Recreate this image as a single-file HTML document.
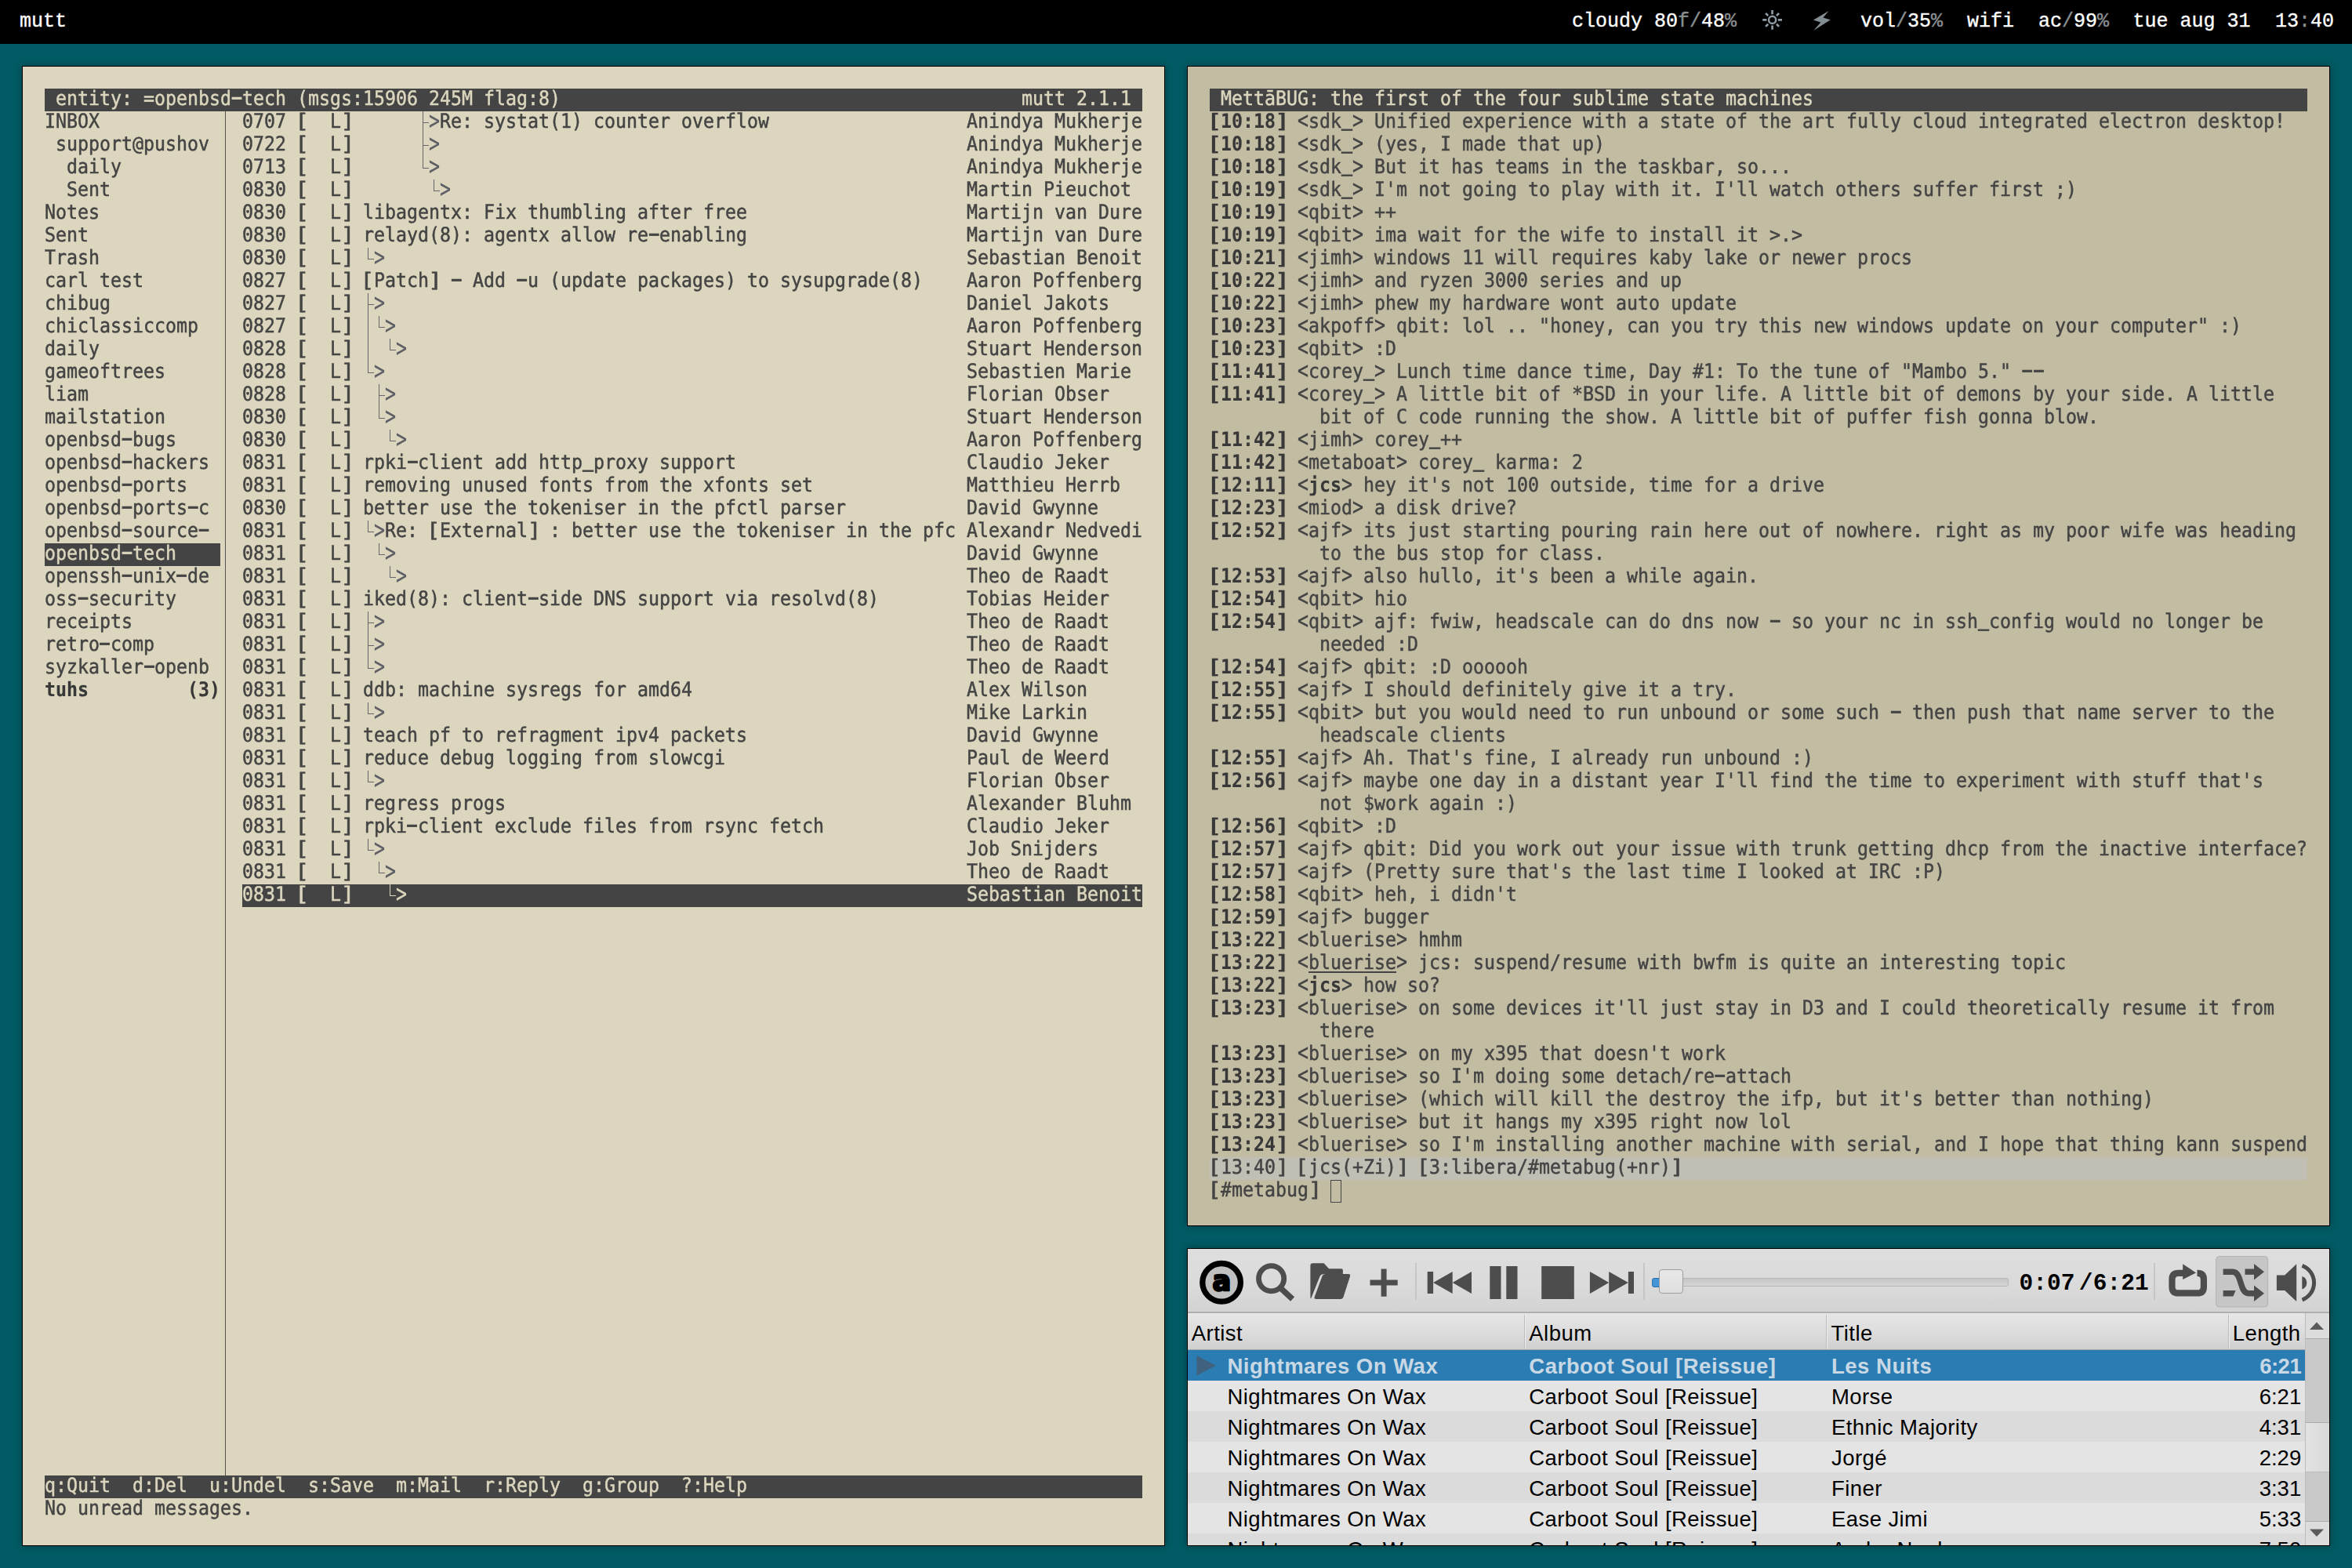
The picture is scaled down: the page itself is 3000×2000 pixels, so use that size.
<!DOCTYPE html><html lang="en"><head><meta charset="utf-8"><title>desktop</title><style>
html,body{margin:0;padding:0}
body{width:3000px;height:2000px;overflow:hidden;background:#005b64;position:relative;font-family:"DejaVu Sans Mono", "Liberation Mono", monospace;}
#bar{position:absolute;left:0;top:0;width:3000px;height:56px;background:#000}
.bt{position:absolute;top:-0.2px;height:56px;line-height:56px;transform:scaleY(1.035);transform-origin:0 62.5%;-webkit-text-stroke:0.35px;font-family:"Liberation Mono",monospace;font-size:25px;color:#fff;white-space:pre}
.bt i{font-style:normal;color:#8a8f91}
.win{position:absolute;box-sizing:border-box;border:1px solid #000;overflow:hidden;box-shadow:0 0 9px rgba(0,0,0,.35)}
.hl{position:absolute;height:29px;background:#444444}
.tx{position:absolute;left:28px;top:28px;-webkit-text-stroke:0.5px;text-rendering:geometricPrecision;width:1568.68px;transform:scaleX(0.91582);transform-origin:0 0;font-size:25.4px;color:#444444}
.r{position:absolute;left:0;height:29px;line-height:29px;white-space:pre;margin-top:-2.25px}
.inv{color:#dbd6bd}
b{font-weight:bold;color:#383838;-webkit-text-stroke:0.15px}
.t{color:transparent;-webkit-text-stroke:0}
.g{color:#5e5e66;-webkit-text-stroke:0.15px;display:inline-block;transform:translateY(-0.3px) scaleY(1.3);transform-origin:50% 58%}
.kl{display:inline-block;transform:scaleX(1.3);transform-origin:80% 50%}
.kr{display:inline-block;transform:scaleX(1.3);transform-origin:20% 50%}
.h{display:inline-block;transform:translateY(-1.6px) scale(2,1.25);transform-origin:50% 62%}
.us{display:inline-block;transform:translateY(-2.9px) scaleY(1.6);transform-origin:50% 98%}
.a{display:inline-block;-webkit-text-stroke:0.25px;transform:scaleY(1.24);transform-origin:50% 58%}
.gi{color:#dbd6bd;-webkit-text-stroke:0.15px;display:inline-block;transform:translateY(-0.3px) scaleY(1.3);transform-origin:50% 58%}
.tl{position:absolute;background:#64646a}
u{text-decoration:underline;text-underline-offset:3px;text-decoration-thickness:1.5px}

#pl{position:absolute;left:1514px;top:1592px;width:1458px;height:380px;box-sizing:border-box;border:1px solid #000;background:#dcdcdc;overflow:hidden;font-family:"Liberation Sans",sans-serif;box-shadow:0 0 9px rgba(0,0,0,.35)}
#pl .tb{position:absolute;left:0;top:0;width:1456px;height:80px;background:linear-gradient(#dedede,#dadada 60%,#d3d3d3)}
#pl .tbl{position:absolute;left:0;top:79.5px;width:1456px;height:2.5px;background:linear-gradient(#b9b9b9,#a8a8a8 50%,#b4b4b4)}
#pl svg{position:absolute;left:0;top:0}
#pl .sep{position:absolute;top:18px;width:2px;height:47px;background:#c6c6c6}
#pl .tm{position:absolute;top:26px;height:36px;line-height:36px;font-family:"Liberation Mono",monospace;font-weight:bold;font-size:29.5px;color:#000;white-space:pre}
#pl .hd{position:absolute;left:0;top:82px;width:1425px;height:46px;background:linear-gradient(#e6e6e6,#dcdcdc 55%,#d0d0d0);border-bottom:1px solid #a9a9a9}
#pl .hc{position:absolute;top:83px;height:45px;line-height:50px;font-size:27.5px;letter-spacing:.45px;color:#000;white-space:pre}
#pl .hs{position:absolute;top:84px;width:2px;height:44px;background:linear-gradient(90deg,#bdbdbd 50%,#ececec 50%)}
#pl .row{position:absolute;left:0;width:1425px;height:39px}
#pl .c.n{letter-spacing:0}
#pl .sel .c.n{letter-spacing:-.5px}
#pl .c{position:absolute;top:0;height:39px;line-height:41.6px;font-size:27.5px;letter-spacing:.42px;color:#000;white-space:pre}
#pl .sel .c{color:#c8d8e4;font-weight:bold;letter-spacing:.5px}
#pl .sb{position:absolute;left:1425px;top:82px;width:31px;height:297px;background:#dcdcdc;border-left:1px solid #bdbdbd;box-sizing:border-box}
</style></head><body>
<div id="bar">
<div class="bt" style="left:25px">mutt</div>
<div class="bt" style="left:2005px">cloudy 80<i>f/</i>48<i>%</i></div>
<svg style="position:absolute;left:2240px;top:0" width="110" height="56" viewBox="2240 0 110 56"><circle cx="2260.6" cy="25.4" r="4.55" fill="none" stroke="#8d99a3" stroke-width="2.5"/><path d="M2267.80 25.40 L2273.00 25.40 M2265.97 30.77 L2269.09 33.89 M2260.60 32.60 L2260.60 37.80 M2255.23 30.77 L2252.11 33.89 M2253.40 25.40 L2248.20 25.40 M2255.23 20.03 L2252.11 16.91 M2260.60 18.20 L2260.60 13.00 M2265.97 20.03 L2269.09 16.91" stroke="#8d99a3" stroke-width="2.7" fill="none"/><path d="M2332.55 14.08 L2312.9 25.4 L2322.35 28.47 L2313.16 38.93 L2334.85 25.3 L2325.4 22.6 Z" fill="#828d94"/></svg>
<div class="bt" style="left:2373px">vol<i>/</i>35<i>%</i></div>
<div class="bt" style="left:2509px">wifi</div>
<div class="bt" style="left:2600px">ac<i>/</i>99<i>%</i></div>
<div class="bt" style="left:2720.5px">tue aug 31</div>
<div class="bt" style="left:2902px">13<i>:</i>40</div>
</div>
<div class="win" id="mutt" style="left:28px;top:84px;width:1458px;height:1888px;background:#dbd6bd">
<div class="hl" style="left:28px;top:28px;width:1400px;background:#444444"></div>
<div class="hl" style="left:28px;top:608px;width:224px;background:#444444"></div>
<div class="hl" style="left:280px;top:1043px;width:1148px;background:#444444"></div>
<div class="hl" style="left:28px;top:1797px;width:1400px;background:#444444"></div>
<div style="position:absolute;left:258px;top:57px;width:1px;height:1740px;background:#55554e"></div>
<div class="tl" style="left:510px;top:57px;width:1px;height:29px"></div><div class="tl" style="left:510px;top:71px;width:8px;height:1px"></div>
<div class="tl" style="left:510px;top:86px;width:1px;height:29px"></div><div class="tl" style="left:510px;top:100px;width:8px;height:1px"></div>
<div class="tl" style="left:510px;top:115px;width:1px;height:15px"></div><div class="tl" style="left:510px;top:129px;width:8px;height:1px"></div>
<div class="tl" style="left:524px;top:144px;width:1px;height:15px"></div><div class="tl" style="left:524px;top:158px;width:8px;height:1px"></div>


<div class="tl" style="left:440px;top:231px;width:1px;height:15px"></div><div class="tl" style="left:440px;top:245px;width:8px;height:1px"></div>

<div class="tl" style="left:440px;top:289px;width:1px;height:29px"></div><div class="tl" style="left:440px;top:303px;width:8px;height:1px"></div>
<div class="tl" style="left:440px;top:318px;width:1px;height:29px"></div><div class="tl" style="left:454px;top:318px;width:1px;height:15px"></div><div class="tl" style="left:454px;top:332px;width:8px;height:1px"></div>
<div class="tl" style="left:440px;top:347px;width:1px;height:29px"></div><div class="tl" style="left:468px;top:347px;width:1px;height:15px"></div><div class="tl" style="left:468px;top:361px;width:8px;height:1px"></div>
<div class="tl" style="left:440px;top:376px;width:1px;height:15px"></div><div class="tl" style="left:440px;top:390px;width:8px;height:1px"></div>
<div class="tl" style="left:454px;top:405px;width:1px;height:29px"></div><div class="tl" style="left:454px;top:419px;width:8px;height:1px"></div>
<div class="tl" style="left:454px;top:434px;width:1px;height:15px"></div><div class="tl" style="left:454px;top:448px;width:8px;height:1px"></div>
<div class="tl" style="left:468px;top:463px;width:1px;height:15px"></div><div class="tl" style="left:468px;top:477px;width:8px;height:1px"></div>



<div class="tl" style="left:440px;top:579px;width:1px;height:15px"></div><div class="tl" style="left:440px;top:593px;width:8px;height:1px"></div>
<div class="tl" style="left:454px;top:608px;width:1px;height:15px"></div><div class="tl" style="left:454px;top:622px;width:8px;height:1px"></div>
<div class="tl" style="left:468px;top:637px;width:1px;height:15px"></div><div class="tl" style="left:468px;top:651px;width:8px;height:1px"></div>

<div class="tl" style="left:440px;top:695px;width:1px;height:29px"></div><div class="tl" style="left:440px;top:709px;width:8px;height:1px"></div>
<div class="tl" style="left:440px;top:724px;width:1px;height:29px"></div><div class="tl" style="left:440px;top:738px;width:8px;height:1px"></div>
<div class="tl" style="left:440px;top:753px;width:1px;height:15px"></div><div class="tl" style="left:440px;top:767px;width:8px;height:1px"></div>

<div class="tl" style="left:440px;top:811px;width:1px;height:15px"></div><div class="tl" style="left:440px;top:825px;width:8px;height:1px"></div>


<div class="tl" style="left:440px;top:898px;width:1px;height:15px"></div><div class="tl" style="left:440px;top:912px;width:8px;height:1px"></div>


<div class="tl" style="left:440px;top:985px;width:1px;height:15px"></div><div class="tl" style="left:440px;top:999px;width:8px;height:1px"></div>
<div class="tl" style="left:454px;top:1014px;width:1px;height:15px"></div><div class="tl" style="left:454px;top:1028px;width:8px;height:1px"></div>
<div class="tl" style="left:468px;top:1043px;width:1px;height:15px;background:#dbd6bd"></div><div class="tl" style="left:468px;top:1057px;width:8px;height:1px;background:#dbd6bd"></div>
<div class="tx">
<div class="r inv" style="top:0px"> entity: =openbsd<span class="h">-</span>tech (msgs:15906 245M flag:8)                                          mutt 2.1.1 </div>
<div class="r" style="top:29px">INBOX             0707 <span class="kl">[</span>  L<span class="kr">]</span>      <span class="t">├</span><span class="g">&gt;</span>Re: systat(1) counter overflow                  Anindya Mukherje</div>
<div class="r" style="top:58px"> support@pushov   0722 <span class="kl">[</span>  L<span class="kr">]</span>      <span class="t">├</span><span class="g">&gt;</span>                                                Anindya Mukherje</div>
<div class="r" style="top:87px">  daily           0713 <span class="kl">[</span>  L<span class="kr">]</span>      <span class="t">└</span><span class="g">&gt;</span>                                                Anindya Mukherje</div>
<div class="r" style="top:116px">  Sent            0830 <span class="kl">[</span>  L<span class="kr">]</span>       <span class="t">└</span><span class="g">&gt;</span>                                               Martin Pieuchot</div>
<div class="r" style="top:145px">Notes             0830 <span class="kl">[</span>  L<span class="kr">]</span> libagentx: Fix thumbling after free                    Martijn van Dure</div>
<div class="r" style="top:174px">Sent              0830 <span class="kl">[</span>  L<span class="kr">]</span> relayd(8): agentx allow re<span class="h">-</span>enabling                    Martijn van Dure</div>
<div class="r" style="top:203px">Trash             0830 <span class="kl">[</span>  L<span class="kr">]</span> <span class="t">└</span><span class="g">&gt;</span>                                                     Sebastian Benoit</div>
<div class="r" style="top:232px">carl test         0827 <span class="kl">[</span>  L<span class="kr">]</span> <span class="kl">[</span>Patch<span class="kr">]</span> <span class="h">-</span> Add <span class="h">-</span>u (update packages) to sysupgrade(8)    Aaron Poffenberg</div>
<div class="r" style="top:261px">chibug            0827 <span class="kl">[</span>  L<span class="kr">]</span> <span class="t">├</span><span class="g">&gt;</span>                                                     Daniel Jakots</div>
<div class="r" style="top:290px">chiclassiccomp    0827 <span class="kl">[</span>  L<span class="kr">]</span> <span class="t">│</span><span class="t">└</span><span class="g">&gt;</span>                                                    Aaron Poffenberg</div>
<div class="r" style="top:319px">daily             0828 <span class="kl">[</span>  L<span class="kr">]</span> <span class="t">│</span> <span class="t">└</span><span class="g">&gt;</span>                                                   Stuart Henderson</div>
<div class="r" style="top:348px">gameoftrees       0828 <span class="kl">[</span>  L<span class="kr">]</span> <span class="t">└</span><span class="g">&gt;</span>                                                     Sebastien Marie</div>
<div class="r" style="top:377px">liam              0828 <span class="kl">[</span>  L<span class="kr">]</span>  <span class="t">├</span><span class="g">&gt;</span>                                                    Florian Obser</div>
<div class="r" style="top:406px">mailstation       0830 <span class="kl">[</span>  L<span class="kr">]</span>  <span class="t">└</span><span class="g">&gt;</span>                                                    Stuart Henderson</div>
<div class="r" style="top:435px">openbsd<span class="h">-</span>bugs      0830 <span class="kl">[</span>  L<span class="kr">]</span>   <span class="t">└</span><span class="g">&gt;</span>                                                   Aaron Poffenberg</div>
<div class="r" style="top:464px">openbsd<span class="h">-</span>hackers   0831 <span class="kl">[</span>  L<span class="kr">]</span> rpki<span class="h">-</span>client add http<span class="us">_</span>proxy support                     Claudio Jeker</div>
<div class="r" style="top:493px">openbsd<span class="h">-</span>ports     0831 <span class="kl">[</span>  L<span class="kr">]</span> removing unused fonts from the xfonts set              Matthieu Herrb</div>
<div class="r" style="top:522px">openbsd<span class="h">-</span>ports<span class="h">-</span>c   0830 <span class="kl">[</span>  L<span class="kr">]</span> better use the tokeniser in the pfctl parser           David Gwynne</div>
<div class="r" style="top:551px">openbsd<span class="h">-</span>source<span class="h">-</span>   0831 <span class="kl">[</span>  L<span class="kr">]</span> <span class="t">└</span><span class="g">&gt;</span>Re: <span class="kl">[</span>External<span class="kr">]</span> : better use the tokeniser in the pfc Alexandr Nedvedi</div>
<div class="r" style="top:580px"><span class="inv">openbsd<span class="h">-</span>tech    </span>  0831 <span class="kl">[</span>  L<span class="kr">]</span>  <span class="t">└</span><span class="g">&gt;</span>                                                    David Gwynne</div>
<div class="r" style="top:609px">openssh<span class="h">-</span>unix<span class="h">-</span>de   0831 <span class="kl">[</span>  L<span class="kr">]</span>   <span class="t">└</span><span class="g">&gt;</span>                                                   Theo de Raadt</div>
<div class="r" style="top:638px">oss<span class="h">-</span>security      0831 <span class="kl">[</span>  L<span class="kr">]</span> iked(8): client<span class="h">-</span>side DNS support via resolvd(8)        Tobias Heider</div>
<div class="r" style="top:667px">receipts          0831 <span class="kl">[</span>  L<span class="kr">]</span> <span class="t">├</span><span class="g">&gt;</span>                                                     Theo de Raadt</div>
<div class="r" style="top:696px">retro<span class="h">-</span>comp        0831 <span class="kl">[</span>  L<span class="kr">]</span> <span class="t">├</span><span class="g">&gt;</span>                                                     Theo de Raadt</div>
<div class="r" style="top:725px">syzkaller<span class="h">-</span>openb   0831 <span class="kl">[</span>  L<span class="kr">]</span> <span class="t">└</span><span class="g">&gt;</span>                                                     Theo de Raadt</div>
<div class="r" style="top:754px"><b>tuhs         (3)</b>  0831 <span class="kl">[</span>  L<span class="kr">]</span> ddb: machine sysregs for amd64                         Alex Wilson</div>
<div class="r" style="top:783px">                  0831 <span class="kl">[</span>  L<span class="kr">]</span> <span class="t">└</span><span class="g">&gt;</span>                                                     Mike Larkin</div>
<div class="r" style="top:812px">                  0831 <span class="kl">[</span>  L<span class="kr">]</span> teach pf to refragment ipv4 packets                    David Gwynne</div>
<div class="r" style="top:841px">                  0831 <span class="kl">[</span>  L<span class="kr">]</span> reduce debug logging from slowcgi                      Paul de Weerd</div>
<div class="r" style="top:870px">                  0831 <span class="kl">[</span>  L<span class="kr">]</span> <span class="t">└</span><span class="g">&gt;</span>                                                     Florian Obser</div>
<div class="r" style="top:899px">                  0831 <span class="kl">[</span>  L<span class="kr">]</span> regress progs                                          Alexander Bluhm</div>
<div class="r" style="top:928px">                  0831 <span class="kl">[</span>  L<span class="kr">]</span> rpki<span class="h">-</span>client exclude files from rsync fetch             Claudio Jeker</div>
<div class="r" style="top:957px">                  0831 <span class="kl">[</span>  L<span class="kr">]</span> <span class="t">└</span><span class="g">&gt;</span>                                                     Job Snijders</div>
<div class="r" style="top:986px">                  0831 <span class="kl">[</span>  L<span class="kr">]</span>  <span class="t">└</span><span class="g">&gt;</span>                                                    Theo de Raadt</div>
<div class="r" style="top:1015px">                  <span class="inv">0831 <span class="kl">[</span>  L<span class="kr">]</span>   <span class="t">└</span><span class="gi">&gt;</span>                                                   Sebastian Benoit</span></div>
<div class="r inv" style="top:1769px">q:Quit  d:Del  u:Undel  s:Save  m:Mail  r:Reply  g:Group  ?:Help</div>
<div class="r" style="top:1798px">No unread messages.</div>
</div></div>
<div class="win" id="irc" style="left:1514px;top:84px;width:1458px;height:1480px;background:#c2bca3">
<div class="hl" style="left:28px;top:28px;width:1400px;background:#444444"></div>
<div class="hl" style="left:28px;top:1391px;width:1400px;background:#c1beb4"></div>
<div class="tx">
<div class="r inv" style="top:0px"> MettāBUG: the first of the four sublime state machines</div>
<div class="r" style="top:29px"><b><span class="kl">[</span>10:18<span class="kr">]</span></b> <span class="a">&lt;</span>sdk<span class="us">_</span><span class="a">&gt;</span> Unified experience with a state of the art fully cloud integrated electron desktop!</div>
<div class="r" style="top:58px"><b><span class="kl">[</span>10:18<span class="kr">]</span></b> <span class="a">&lt;</span>sdk<span class="us">_</span><span class="a">&gt;</span> (yes, I made that up)</div>
<div class="r" style="top:87px"><b><span class="kl">[</span>10:18<span class="kr">]</span></b> <span class="a">&lt;</span>sdk<span class="us">_</span><span class="a">&gt;</span> But it has teams in the taskbar, so...</div>
<div class="r" style="top:116px"><b><span class="kl">[</span>10:19<span class="kr">]</span></b> <span class="a">&lt;</span>sdk<span class="us">_</span><span class="a">&gt;</span> I'm not going to play with it. I'll watch others suffer first ;)</div>
<div class="r" style="top:145px"><b><span class="kl">[</span>10:19<span class="kr">]</span></b> <span class="a">&lt;</span>qbit<span class="a">&gt;</span> ++</div>
<div class="r" style="top:174px"><b><span class="kl">[</span>10:19<span class="kr">]</span></b> <span class="a">&lt;</span>qbit<span class="a">&gt;</span> ima wait for the wife to install it &gt;.&gt;</div>
<div class="r" style="top:203px"><b><span class="kl">[</span>10:21<span class="kr">]</span></b> <span class="a">&lt;</span>jimh<span class="a">&gt;</span> windows 11 will requires kaby lake or newer procs</div>
<div class="r" style="top:232px"><b><span class="kl">[</span>10:22<span class="kr">]</span></b> <span class="a">&lt;</span>jimh<span class="a">&gt;</span> and ryzen 3000 series and up</div>
<div class="r" style="top:261px"><b><span class="kl">[</span>10:22<span class="kr">]</span></b> <span class="a">&lt;</span>jimh<span class="a">&gt;</span> phew my hardware wont auto update</div>
<div class="r" style="top:290px"><b><span class="kl">[</span>10:23<span class="kr">]</span></b> <span class="a">&lt;</span>akpoff<span class="a">&gt;</span> qbit: lol .. "honey, can you try this new windows update on your computer" :)</div>
<div class="r" style="top:319px"><b><span class="kl">[</span>10:23<span class="kr">]</span></b> <span class="a">&lt;</span>qbit<span class="a">&gt;</span> :D</div>
<div class="r" style="top:348px"><b><span class="kl">[</span>11:41<span class="kr">]</span></b> <span class="a">&lt;</span>corey<span class="us">_</span><span class="a">&gt;</span> Lunch time dance time, Day #1: To the tune of "Mambo 5." <span class="h">-</span><span class="h">-</span></div>
<div class="r" style="top:377px"><b><span class="kl">[</span>11:41<span class="kr">]</span></b> <span class="a">&lt;</span>corey<span class="us">_</span><span class="a">&gt;</span> A little bit of *BSD in your life. A little bit of demons by your side. A little</div>
<div class="r" style="top:406px">          bit of C code running the show. A little bit of puffer fish gonna blow.</div>
<div class="r" style="top:435px"><b><span class="kl">[</span>11:42<span class="kr">]</span></b> <span class="a">&lt;</span>jimh<span class="a">&gt;</span> corey<span class="us">_</span>++</div>
<div class="r" style="top:464px"><b><span class="kl">[</span>11:42<span class="kr">]</span></b> <span class="a">&lt;</span>metaboat<span class="a">&gt;</span> corey<span class="us">_</span> karma: 2</div>
<div class="r" style="top:493px"><b><span class="kl">[</span>12:11<span class="kr">]</span></b> <span class="a">&lt;</span><b>jcs</b><span class="a">&gt;</span> hey it's not 100 outside, time for a drive</div>
<div class="r" style="top:522px"><b><span class="kl">[</span>12:23<span class="kr">]</span></b> <span class="a">&lt;</span>miod<span class="a">&gt;</span> a disk drive?</div>
<div class="r" style="top:551px"><b><span class="kl">[</span>12:52<span class="kr">]</span></b> <span class="a">&lt;</span>ajf<span class="a">&gt;</span> its just starting pouring rain here out of nowhere. right as my poor wife was heading</div>
<div class="r" style="top:580px">          to the bus stop for class.</div>
<div class="r" style="top:609px"><b><span class="kl">[</span>12:53<span class="kr">]</span></b> <span class="a">&lt;</span>ajf<span class="a">&gt;</span> also hullo, it's been a while again.</div>
<div class="r" style="top:638px"><b><span class="kl">[</span>12:54<span class="kr">]</span></b> <span class="a">&lt;</span>qbit<span class="a">&gt;</span> hio</div>
<div class="r" style="top:667px"><b><span class="kl">[</span>12:54<span class="kr">]</span></b> <span class="a">&lt;</span>qbit<span class="a">&gt;</span> ajf: fwiw, headscale can do dns now <span class="h">-</span> so your nc in ssh<span class="us">_</span>config would no longer be</div>
<div class="r" style="top:696px">          needed :D</div>
<div class="r" style="top:725px"><b><span class="kl">[</span>12:54<span class="kr">]</span></b> <span class="a">&lt;</span>ajf<span class="a">&gt;</span> qbit: :D oooooh</div>
<div class="r" style="top:754px"><b><span class="kl">[</span>12:55<span class="kr">]</span></b> <span class="a">&lt;</span>ajf<span class="a">&gt;</span> I should definitely give it a try.</div>
<div class="r" style="top:783px"><b><span class="kl">[</span>12:55<span class="kr">]</span></b> <span class="a">&lt;</span>qbit<span class="a">&gt;</span> but you would need to run unbound or some such <span class="h">-</span> then push that name server to the</div>
<div class="r" style="top:812px">          headscale clients</div>
<div class="r" style="top:841px"><b><span class="kl">[</span>12:55<span class="kr">]</span></b> <span class="a">&lt;</span>ajf<span class="a">&gt;</span> Ah. That's fine, I already run unbound :)</div>
<div class="r" style="top:870px"><b><span class="kl">[</span>12:56<span class="kr">]</span></b> <span class="a">&lt;</span>ajf<span class="a">&gt;</span> maybe one day in a distant year I'll find the time to experiment with stuff that's</div>
<div class="r" style="top:899px">          not $work again :)</div>
<div class="r" style="top:928px"><b><span class="kl">[</span>12:56<span class="kr">]</span></b> <span class="a">&lt;</span>qbit<span class="a">&gt;</span> :D</div>
<div class="r" style="top:957px"><b><span class="kl">[</span>12:57<span class="kr">]</span></b> <span class="a">&lt;</span>ajf<span class="a">&gt;</span> qbit: Did you work out your issue with trunk getting dhcp from the inactive interface?</div>
<div class="r" style="top:986px"><b><span class="kl">[</span>12:57<span class="kr">]</span></b> <span class="a">&lt;</span>ajf<span class="a">&gt;</span> (Pretty sure that's the last time I looked at IRC :P)</div>
<div class="r" style="top:1015px"><b><span class="kl">[</span>12:58<span class="kr">]</span></b> <span class="a">&lt;</span>qbit<span class="a">&gt;</span> heh, i didn't</div>
<div class="r" style="top:1044px"><b><span class="kl">[</span>12:59<span class="kr">]</span></b> <span class="a">&lt;</span>ajf<span class="a">&gt;</span> bugger</div>
<div class="r" style="top:1073px"><b><span class="kl">[</span>13:22<span class="kr">]</span></b> <span class="a">&lt;</span>bluerise<span class="a">&gt;</span> hmhm</div>
<div class="r" style="top:1102px"><b><span class="kl">[</span>13:22<span class="kr">]</span></b> <span class="a">&lt;</span><u>bluerise</u><span class="a">&gt;</span> jcs: suspend/resume with bwfm is quite an interesting topic</div>
<div class="r" style="top:1131px"><b><span class="kl">[</span>13:22<span class="kr">]</span></b> <span class="a">&lt;</span><b>jcs</b><span class="a">&gt;</span> how so?</div>
<div class="r" style="top:1160px"><b><span class="kl">[</span>13:23<span class="kr">]</span></b> <span class="a">&lt;</span>bluerise<span class="a">&gt;</span> on some devices it'll just stay in D3 and I could theoretically resume it from</div>
<div class="r" style="top:1189px">          there</div>
<div class="r" style="top:1218px"><b><span class="kl">[</span>13:23<span class="kr">]</span></b> <span class="a">&lt;</span>bluerise<span class="a">&gt;</span> on my x395 that doesn't work</div>
<div class="r" style="top:1247px"><b><span class="kl">[</span>13:23<span class="kr">]</span></b> <span class="a">&lt;</span>bluerise<span class="a">&gt;</span> so I'm doing some detach/re<span class="h">-</span>attach</div>
<div class="r" style="top:1276px"><b><span class="kl">[</span>13:23<span class="kr">]</span></b> <span class="a">&lt;</span>bluerise<span class="a">&gt;</span> (which will kill the destroy the ifp, but it's better than nothing)</div>
<div class="r" style="top:1305px"><b><span class="kl">[</span>13:23<span class="kr">]</span></b> <span class="a">&lt;</span>bluerise<span class="a">&gt;</span> but it hangs my x395 right now lol</div>
<div class="r" style="top:1334px"><b><span class="kl">[</span>13:24<span class="kr">]</span></b> <span class="a">&lt;</span>bluerise<span class="a">&gt;</span> so I'm installing another machine with serial, and I hope that thing kann suspend</div>
<div class="r" style="top:1363px"><span class="kl">[</span>13:40<span class="kr">]</span> <span class="kl">[</span>jcs(+Zi)<span class="kr">]</span> <span class="kl">[</span>3:libera/#metabug(+nr)<span class="kr">]</span></div>
<div class="r" style="top:1392px"><span class="kl">[</span>#metabug<span class="kr">]</span> </div>
</div>
<div style="position:absolute;left:182px;top:1420px;width:14px;height:29px;border:1px solid #444444;box-sizing:border-box"></div>
</div>
<div id="pl">
<div class="tb"></div><div class="tbl"></div>
<svg width="1456" height="82" viewBox="0 0 1456 82"><circle cx="43.1" cy="42.8" r="24.3" fill="#c0c0c0" stroke="#000" stroke-width="7.3"/><text x="43.4" y="53.4" text-anchor="middle" font-family="DejaVu Sans, Liberation Sans, sans-serif" font-weight="bold" font-size="35" fill="#000" stroke="#000" stroke-width="2.6" stroke-linejoin="round">a</text><circle cx="106.6" cy="37.7" r="16.1" fill="none" stroke="#4d4d4d" stroke-width="6.8"/><path d="M118.2 49.8 L133.6 64.0" stroke="#4d4d4d" stroke-width="7.4" fill="none"/><g transform="translate(156.4,18.3)" fill="#4d4d4d"><path d="M0 3 Q0 0 3 0 L17.2 0 L23.6 6.9 L39.5 6.9 Q41.5 6.9 41.5 9 L41.5 13.8 L18 13.8 Q13.5 13.8 12 17 L0.8 45 Q0 45.5 0 43 Z"/><path d="M19 13.6 L48.5 13.6 Q51.6 13.6 50.6 16.6 L42 43.5 Q41.3 45.6 39 45.6 L7.5 45.6 Q4.3 45.6 5.3 43 L15.2 16.3 Q16.2 13.6 19 13.6 Z"/></g><path d="M232.5 43.1 H267.7 M250.1 25.5 V60.7" stroke="#4d4d4d" stroke-width="7" fill="none"/><path fill="#4d4d4d" d="M305.7 29.0 H313.1 V57.0 H305.7 Z M313.1 43.0 L337.7 29.0 V57.0 Z M337.7 43.0 L362.0 29.0 V57.0 Z"/><path fill="#4d4d4d" d="M385.3 21.9 H399.5 V63.9 H385.3 Z M406.3 21.9 H420.5 V63.9 H406.3 Z"/><path fill="#4d4d4d" d="M451.2 21.9 H492.8 V63.9 H451.2 Z"/><path fill="#4d4d4d" d="M512.9 29.0 L537.2 43.0 L512.9 57.0 Z M537.2 29.0 L561.9 43.0 L537.2 57.0 Z M561.9 29.0 H569.0 V57.0 H561.9 Z"/><path fill="none" stroke="#4d4d4d" stroke-width="8.2" d="M1270.2 30.9 H1263.5 Q1255.5 30.9 1255.5 38.9 V48.4 Q1255.5 56.4 1263.5 56.4 H1287.9 Q1295.9 56.4 1295.9 48.4 V38.9 Q1295.9 30.9 1287.9 30.9 H1287.5"/><path fill="#4d4d4d" d="M1269.2 19.3 L1286.0 30.4 L1269.2 39.0 Z"/><rect x="1311.7" y="9.5" width="66" height="64.5" rx="4" fill="#c6c6c6" stroke="#b2b2b2" stroke-width="1"/><path fill="none" stroke="#4d4d4d" stroke-width="7.4" d="M1320.6 29.2 H1333 C1345 29.2 1341 56.7 1353 56.7 H1361.0"/><path fill="none" stroke="#4d4d4d" stroke-width="7.4" d="M1348.5 29.2 H1361.0"/><path fill="#4d4d4d" d="M1320.6 53.0 H1336.5 L1333.5 60.400000000000006 H1320.6 Z"/><path fill="#4d4d4d" d="M1360.0 19.0 L1373.0 29.2 L1360.0 39.4 Z M1360.0 46.5 L1373.0 56.7 L1360.0 66.9 Z"/><path fill="#4d4d4d" d="M1388.9 33.400000000000006 H1399.2 L1414.2 19.300000000000004 V67.1 L1399.2 53.0 H1388.9 Z"/><path fill="#4d4d4d" d="M1421.3000000000002 35.0 A8.6 8.6 0 0 1 1421.3000000000002 51.400000000000006 Z"/><path fill="none" stroke="#4d4d4d" stroke-width="5" d="M1421.5 21.400000000000002 A23.3 23.3 0 0 1 1421.5 65.0"/></svg>
<div class="sep" style="left:290.2px"></div>
<div class="sep" style="left:581.4px"></div>
<div class="sep" style="left:1232.4px"></div>
<div style="position:absolute;left:592px;top:37px;width:455px;height:11px;box-sizing:border-box;border:1px solid #b6b6b6;border-radius:3px;background:linear-gradient(#c6c6c6,#d6d6d6)"></div>
<div style="position:absolute;left:592px;top:36.7px;width:14px;height:12px;box-sizing:border-box;border:1px solid #2c70ad;border-radius:3px;background:#4595d6"></div>
<div style="position:absolute;left:600.5px;top:25.6px;width:31.5px;height:31px;box-sizing:border-box;border:1px solid #9d9d9d;border-radius:4px;background:linear-gradient(#e8e8e8,#dedede)"></div>
<div class="tm" style="left:1060.6px">0:07</div><div class="tm" style="left:1136.8px">/</div><div class="tm" style="left:1154.8px">6:21</div>
<div class="hd"></div>
<div class="hc" style="left:4.8px">Artist</div>
<div class="hc" style="left:435.3px">Album</div>
<div class="hc" style="left:820.5px">Title</div>
<div class="hc" style="left:1327px;width:92.6px;text-align:right">Length</div>
<div class="hs" style="left:428.6px"></div>
<div class="hs" style="left:814.3px"></div>
<div class="hs" style="left:1327.0px"></div>
<div class="row sel" style="top:129px;background:#2b7cb3">
<svg width="40" height="39" viewBox="0 0 40 39"><path d="M11.5 7 L36 19.7 L11.5 32.4 Z" fill="#40627f"/></svg>
<div class="c" style="left:50.4px">Nightmares On Wax</div>
<div class="c" style="left:435.3px">Carboot Soul [Reissue]</div>
<div class="c" style="left:821px">Les Nuits</div>
<div class="c n" style="left:1285px;width:135.2px;text-align:right">6:21</div>
</div>
<div class="row" style="top:168px;background:#e4e4e4">
<div class="c" style="left:50.4px">Nightmares On Wax</div>
<div class="c" style="left:435.3px">Carboot Soul [Reissue]</div>
<div class="c" style="left:821px">Morse</div>
<div class="c n" style="left:1285px;width:135.2px;text-align:right">6:21</div>
</div>
<div class="row" style="top:207px;background:#dbdbdb">
<div class="c" style="left:50.4px">Nightmares On Wax</div>
<div class="c" style="left:435.3px">Carboot Soul [Reissue]</div>
<div class="c" style="left:821px">Ethnic Majority</div>
<div class="c n" style="left:1285px;width:135.2px;text-align:right">4:31</div>
</div>
<div class="row" style="top:246px;background:#e4e4e4">
<div class="c" style="left:50.4px">Nightmares On Wax</div>
<div class="c" style="left:435.3px">Carboot Soul [Reissue]</div>
<div class="c" style="left:821px">Jorgé</div>
<div class="c n" style="left:1285px;width:135.2px;text-align:right">2:29</div>
</div>
<div class="row" style="top:285px;background:#dbdbdb">
<div class="c" style="left:50.4px">Nightmares On Wax</div>
<div class="c" style="left:435.3px">Carboot Soul [Reissue]</div>
<div class="c" style="left:821px">Finer</div>
<div class="c n" style="left:1285px;width:135.2px;text-align:right">3:31</div>
</div>
<div class="row" style="top:324px;background:#e4e4e4">
<div class="c" style="left:50.4px">Nightmares On Wax</div>
<div class="c" style="left:435.3px">Carboot Soul [Reissue]</div>
<div class="c" style="left:821px">Ease Jimi</div>
<div class="c n" style="left:1285px;width:135.2px;text-align:right">5:33</div>
</div>
<div class="row" style="top:363px;background:#dbdbdb">
<div class="c" style="left:50.4px">Nightmares On Wax</div>
<div class="c" style="left:435.3px">Carboot Soul [Reissue]</div>
<div class="c" style="left:821px">Argha Noah</div>
<div class="c n" style="left:1285px;width:135.2px;text-align:right">7:50</div>
</div>
<div class="sb">
<svg width="30" height="297" viewBox="0 0 30 297"><path d="M5 21 L14 11.5 L23 21 Z" fill="#5a5a5a"/><path d="M5 275.5 L23 275.5 L14 285 Z" fill="#5a5a5a"/></svg>
<div style="position:absolute;left:0;top:32px;width:30px;height:108px;background:#c9c9c9;border-top:1px solid #ababab;border-bottom:1px solid #ababab;box-sizing:border-box"></div>
<div style="position:absolute;left:0;top:140px;width:30px;height:62px;background:linear-gradient(90deg,#e2e2e2,#d9d9d9)"></div>
<div style="position:absolute;left:0;top:202px;width:30px;height:64px;background:#c9c9c9;border-top:1px solid #bcbcbc;border-bottom:1px solid #ababab;box-sizing:border-box"></div>
</div>
</div>
</body></html>
